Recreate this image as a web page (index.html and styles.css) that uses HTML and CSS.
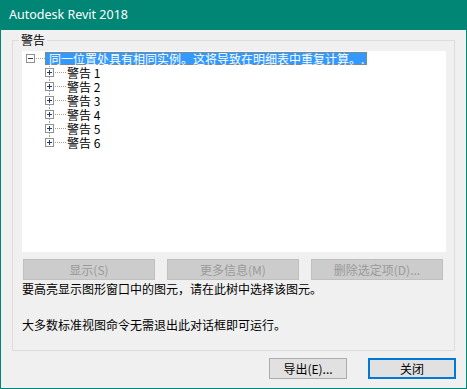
FILE: index.html
```html
<!DOCTYPE html>
<html lang="zh-CN">
<head>
<meta charset="utf-8">
<title>Autodesk Revit 2018</title>
<link rel="stylesheet" href="styles.css">
</head>
<body>
<div class="window">
  <div class="titlebar">Autodesk Revit 2018</div>
  <div class="group">
    <span class="group-label">警告</span>
    <div class="tree">
      <div class="row root">
        <svg class="exp-root" width="19" height="14" viewBox="0 0 19 14">
          <rect x="0.5" y="2.5" width="8" height="8" fill="#fff" stroke="#919191"/>
          <line x1="2" y1="6.5" x2="7" y2="6.5" stroke="#3c3c3c"/>
          <line x1="10" y1="6.5" x2="19" y2="6.5" stroke="#a0a0a0" stroke-dasharray="1 1"/>
        </svg>
        <span class="sel">同一位置处具有相同实例。这将导致在明细表中重复计算。.</span>
      </div>
      <div class="row child">
        <svg width="21" height="14" viewBox="0 0 21 14">
          <line x1="4.5" y1="0" x2="4.5" y2="2" stroke="#a0a0a0" stroke-dasharray="1 1"/>
          <line x1="4.5" y1="11" x2="4.5" y2="14" stroke="#a0a0a0" stroke-dasharray="1 1"/>
          <rect x="0.5" y="2.5" width="8" height="8" fill="#fff" stroke="#919191"/>
          <line x1="2" y1="6.5" x2="7" y2="6.5" stroke="#1f3a78"/>
          <line x1="4.5" y1="4" x2="4.5" y2="9" stroke="#1f3a78"/>
          <line x1="10" y1="6.5" x2="21" y2="6.5" stroke="#a0a0a0" stroke-dasharray="1 1"/>
        </svg>
        <span class="label">警告 1</span>
      </div>
      <div class="row child">
        <svg width="21" height="14" viewBox="0 0 21 14">
          <line x1="4.5" y1="0" x2="4.5" y2="2" stroke="#a0a0a0" stroke-dasharray="1 1"/>
          <line x1="4.5" y1="11" x2="4.5" y2="14" stroke="#a0a0a0" stroke-dasharray="1 1"/>
          <rect x="0.5" y="2.5" width="8" height="8" fill="#fff" stroke="#919191"/>
          <line x1="2" y1="6.5" x2="7" y2="6.5" stroke="#1f3a78"/>
          <line x1="4.5" y1="4" x2="4.5" y2="9" stroke="#1f3a78"/>
          <line x1="10" y1="6.5" x2="21" y2="6.5" stroke="#a0a0a0" stroke-dasharray="1 1"/>
        </svg>
        <span class="label">警告 2</span>
      </div>
      <div class="row child">
        <svg width="21" height="14" viewBox="0 0 21 14">
          <line x1="4.5" y1="0" x2="4.5" y2="2" stroke="#a0a0a0" stroke-dasharray="1 1"/>
          <line x1="4.5" y1="11" x2="4.5" y2="14" stroke="#a0a0a0" stroke-dasharray="1 1"/>
          <rect x="0.5" y="2.5" width="8" height="8" fill="#fff" stroke="#919191"/>
          <line x1="2" y1="6.5" x2="7" y2="6.5" stroke="#1f3a78"/>
          <line x1="4.5" y1="4" x2="4.5" y2="9" stroke="#1f3a78"/>
          <line x1="10" y1="6.5" x2="21" y2="6.5" stroke="#a0a0a0" stroke-dasharray="1 1"/>
        </svg>
        <span class="label">警告 3</span>
      </div>
      <div class="row child">
        <svg width="21" height="14" viewBox="0 0 21 14">
          <line x1="4.5" y1="0" x2="4.5" y2="2" stroke="#a0a0a0" stroke-dasharray="1 1"/>
          <line x1="4.5" y1="11" x2="4.5" y2="14" stroke="#a0a0a0" stroke-dasharray="1 1"/>
          <rect x="0.5" y="2.5" width="8" height="8" fill="#fff" stroke="#919191"/>
          <line x1="2" y1="6.5" x2="7" y2="6.5" stroke="#1f3a78"/>
          <line x1="4.5" y1="4" x2="4.5" y2="9" stroke="#1f3a78"/>
          <line x1="10" y1="6.5" x2="21" y2="6.5" stroke="#a0a0a0" stroke-dasharray="1 1"/>
        </svg>
        <span class="label">警告 4</span>
      </div>
      <div class="row child">
        <svg width="21" height="14" viewBox="0 0 21 14">
          <line x1="4.5" y1="0" x2="4.5" y2="2" stroke="#a0a0a0" stroke-dasharray="1 1"/>
          <line x1="4.5" y1="11" x2="4.5" y2="14" stroke="#a0a0a0" stroke-dasharray="1 1"/>
          <rect x="0.5" y="2.5" width="8" height="8" fill="#fff" stroke="#919191"/>
          <line x1="2" y1="6.5" x2="7" y2="6.5" stroke="#1f3a78"/>
          <line x1="4.5" y1="4" x2="4.5" y2="9" stroke="#1f3a78"/>
          <line x1="10" y1="6.5" x2="21" y2="6.5" stroke="#a0a0a0" stroke-dasharray="1 1"/>
        </svg>
        <span class="label">警告 5</span>
      </div>
      <div class="row child">
        <svg width="21" height="14" viewBox="0 0 21 14">
          <line x1="4.5" y1="0" x2="4.5" y2="2" stroke="#a0a0a0" stroke-dasharray="1 1"/>
          <rect x="0.5" y="2.5" width="8" height="8" fill="#fff" stroke="#919191"/>
          <line x1="2" y1="6.5" x2="7" y2="6.5" stroke="#1f3a78"/>
          <line x1="4.5" y1="4" x2="4.5" y2="9" stroke="#1f3a78"/>
          <line x1="10" y1="6.5" x2="21" y2="6.5" stroke="#a0a0a0" stroke-dasharray="1 1"/>
        </svg>
        <span class="label">警告 6</span>
      </div>
    </div>
    <div class="actions">
      <button class="btn-disabled">显示(S)</button>
      <button class="btn-disabled">更多信息(M)</button>
      <button class="btn-disabled">删除选定项(D)...</button>
    </div>
    <p class="hint">要高亮显示图形窗口中的图元，请在此树中选择该图元。<br><br>大多数标准视图命令无需退出此对话框即可运行。</p>
  </div>
  <div class="footer">
    <button class="btn btn-export">导出(E)...</button>
    <button class="btn btn-close">关闭</button>
  </div>
</div>
</body>
</html>
```

FILE: styles.css
```css
* { box-sizing: border-box; }
html, body { margin: 0; padding: 0; background: #f0f0f0; }
body {
  font-family: "Noto Sans CJK SC", "Noto Sans", sans-serif;
  font-size: 12px;
  color: #000;
}
.window {
  width: 467px;
  height: 389px;
  background: #f0f0f0;
  border: 1px solid #018574;
  border-top: 0;
  display: flex;
  flex-direction: column;
}
.titlebar {
  height: 30px;
  margin: 0 -1px;
  background: #018574;
  color: #fff;
  font-family: "Noto Sans", sans-serif;
  font-size: 12.5px;
  line-height: 30px;
  padding-left: 9px;
}
.group {
  position: relative;
  margin: 10px 11px 0 11px;
  height: 311px;
  border: 1px solid #dcdcdc;
  padding: 10px 8px 0 9px;
}
.group-label {
  position: absolute;
  top: -9px;
  left: 6px;
  padding: 0 2px;
  background: #f0f0f0;
  line-height: 16px;
}
.tree {
  height: 201px;
  background: #fff;
  padding-top: 1px;
}
.row {
  display: flex;
  align-items: flex-start;
  height: 14px;
}
.row svg { display: block; flex: none; }
.root { padding-left: 4px; }
.child { padding-left: 23px; }
.sel {
  background: #3399ff;
  color: #fff;
  height: 13px;
  line-height: 11px;
  padding: 0 2px 0 3px;
  border: 1px dotted #c0782a;
  white-space: nowrap;
}
.label {
  margin-left: 1px;
  margin-top: 1px;
  height: 12px;
  line-height: 12px;
  white-space: nowrap;
}
.actions {
  display: flex;
  gap: 12px;
  margin: 7px 0 0 1px;
}
button {
  font-family: "Noto Sans CJK SC", "Noto Sans", sans-serif;
  font-size: 12px;
  padding: 0;
  margin: 0;
  height: 21px;
  line-height: 17px;
}
.btn-disabled {
  width: 132px;
  background: #cccccc;
  border: 1px solid #bfbfbf;
  color: #9a9a9a;
}
.hint {
  margin: 0;
  line-height: 18px;
  padding-left: 0;
}
.footer {
  display: flex;
  justify-content: flex-end;
  gap: 21px;
  padding: 7px 10px 0 0;
}
.btn {
  background: #e1e1e1;
  border: 1px solid #adadad;
  color: #000;
}
.btn-export { width: 78px; }
.btn-close {
  width: 88px;
  border: 2px solid #0078d7;
}
```
